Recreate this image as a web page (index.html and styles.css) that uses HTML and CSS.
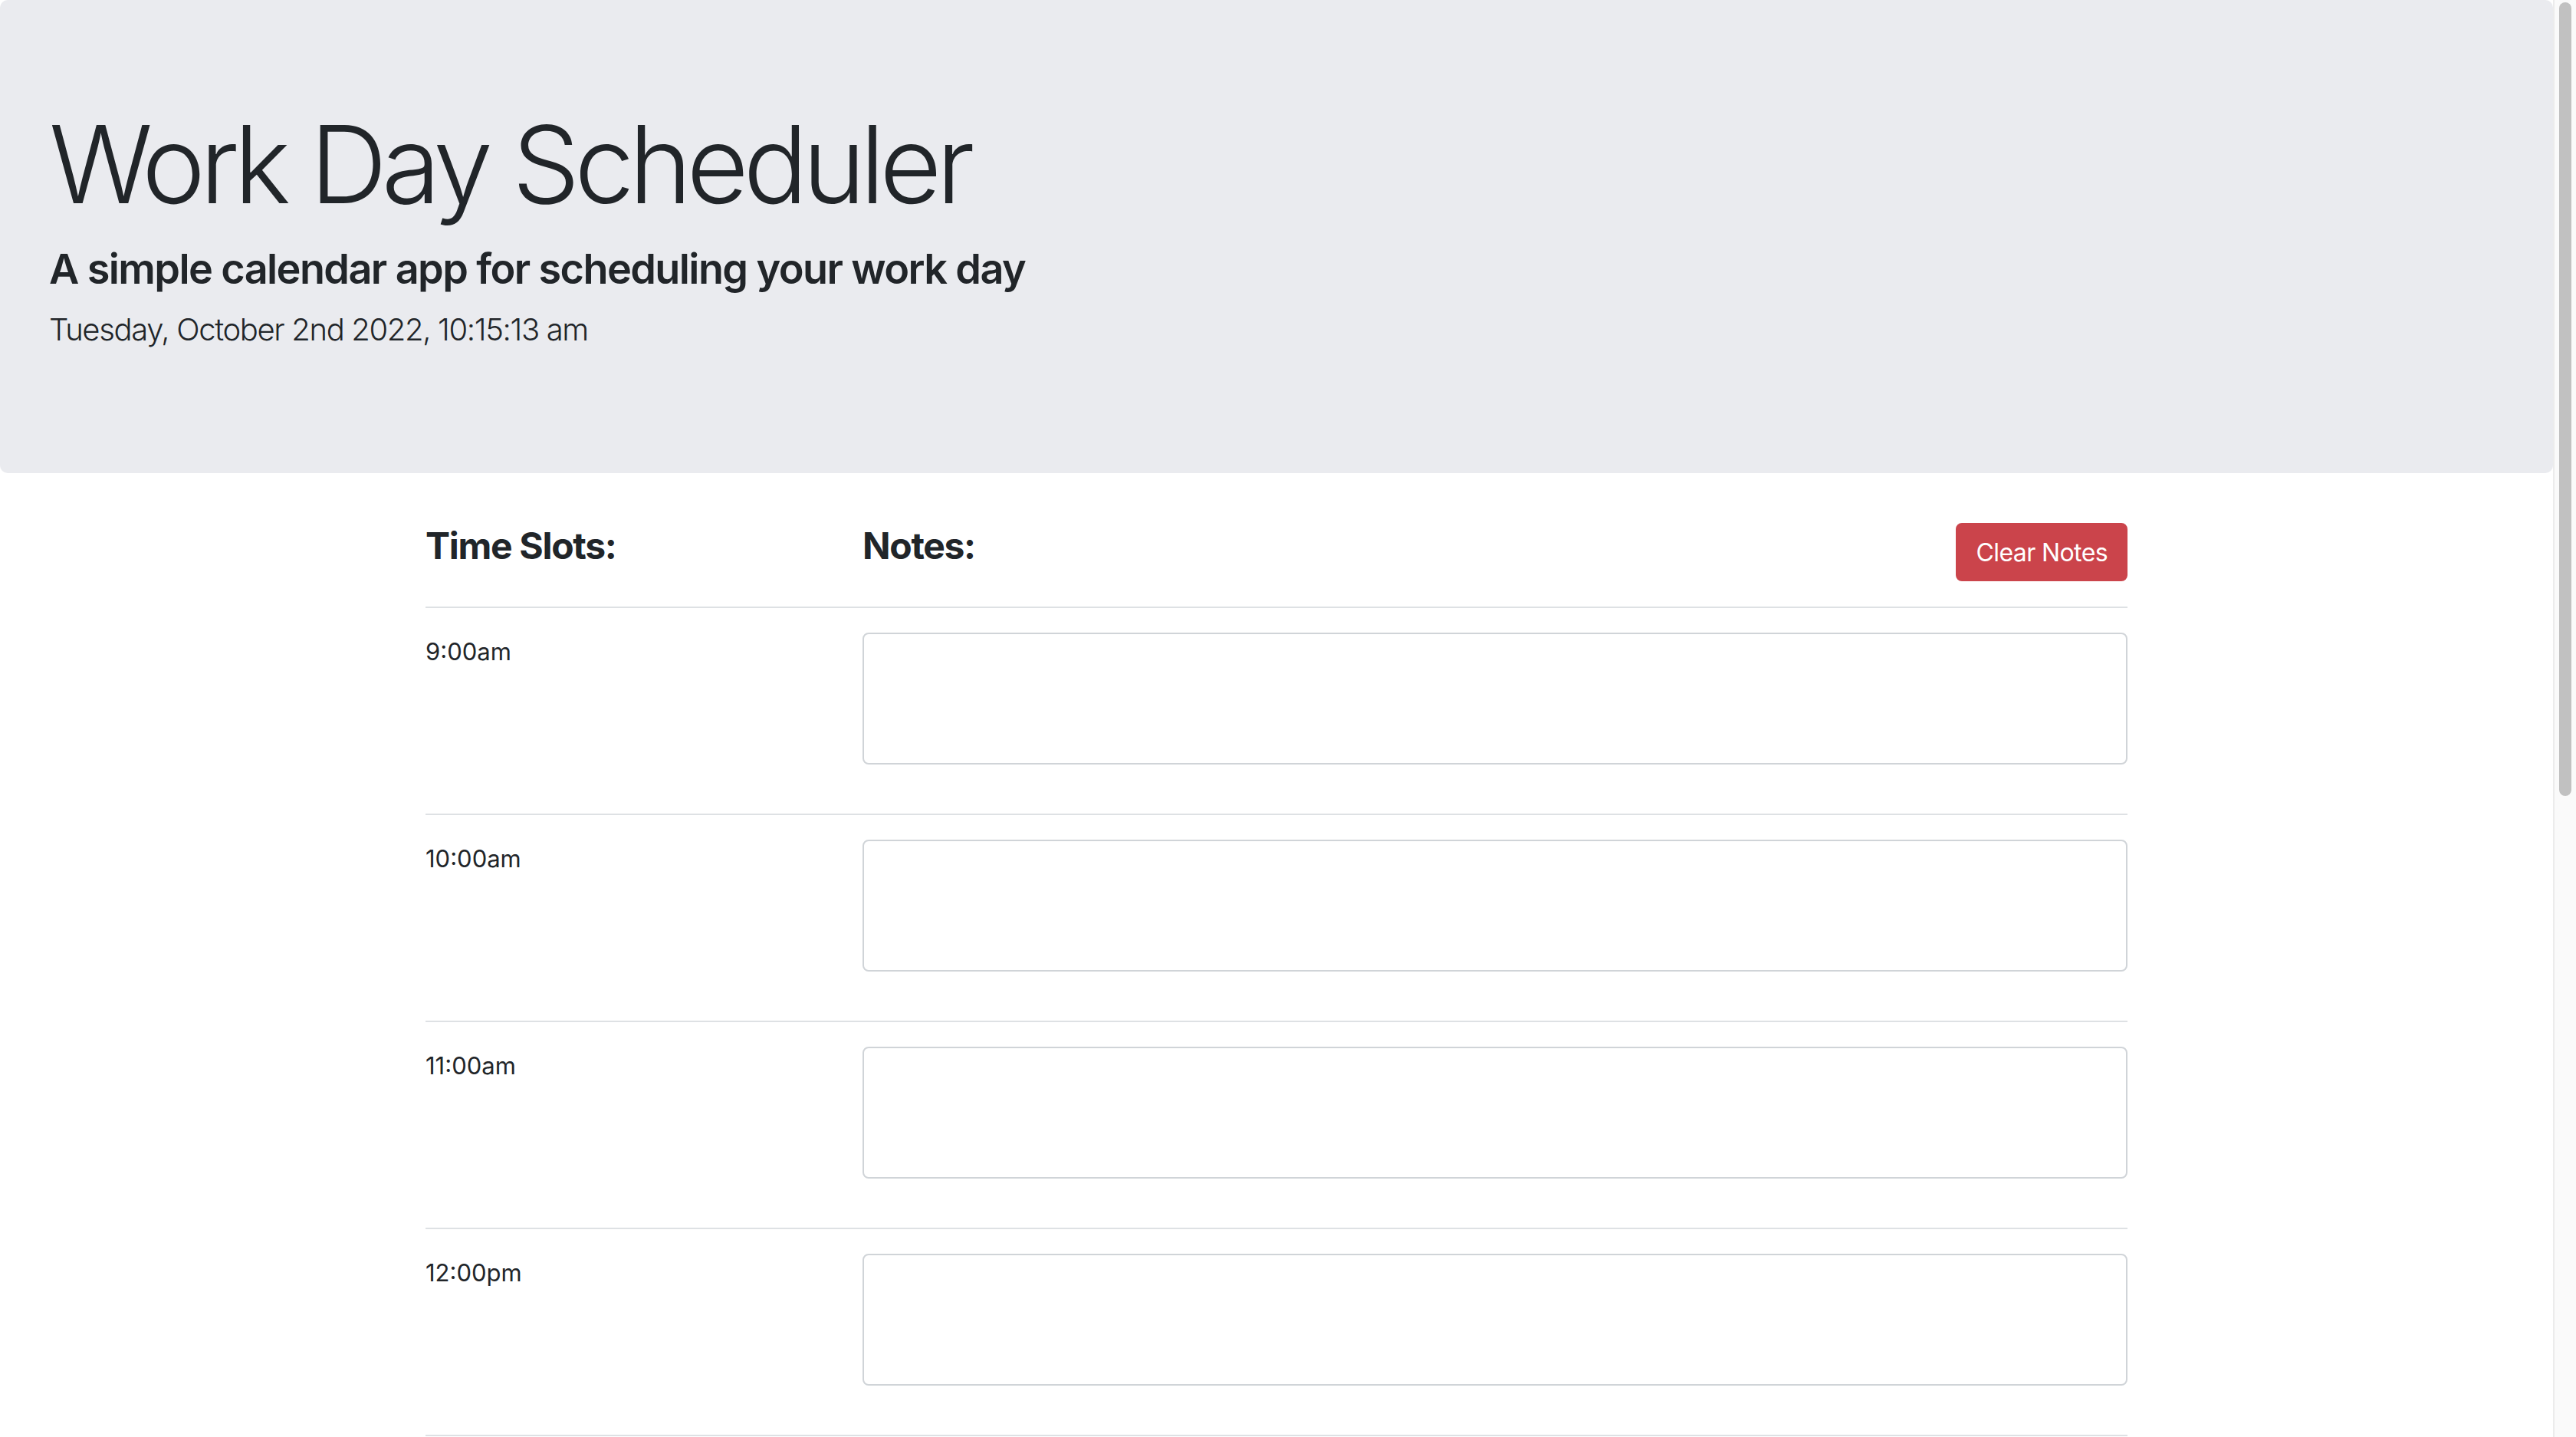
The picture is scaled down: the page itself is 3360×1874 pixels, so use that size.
FILE: index.html
```html
<!DOCTYPE html>
<html lang="en">
<head>
<meta charset="utf-8">
<title>Work Day Scheduler</title>
<link rel="stylesheet" href="styles.css">
</head>
<body>
<header class="jumbotron">
  <h1 class="display-title">Work Day Scheduler</h1>
  <h3 class="subtitle">A simple calendar app for scheduling your work day</h3>
  <p class="lead">Tuesday, October 2nd 2022, 10:15:13 am</p>
</header>
<main class="container">
  <div class="row heading-row">
    <div class="col-time"><h4 class="col-title">Time Slots:</h4></div>
    <div class="col-notes notes-head">
      <h4 class="col-title">Notes:</h4>
      <button class="btn-danger" type="button">Clear Notes</button>
    </div>
  </div>
  <hr class="divider">
  <div class="row slot">
    <div class="col-time"><span class="hour">9:00am</span></div>
    <div class="col-notes"><textarea class="note" rows="3"></textarea></div>
  </div>
  <hr class="divider">
  <div class="row slot">
    <div class="col-time"><span class="hour">10:00am</span></div>
    <div class="col-notes"><textarea class="note" rows="3"></textarea></div>
  </div>
  <hr class="divider">
  <div class="row slot">
    <div class="col-time"><span class="hour">11:00am</span></div>
    <div class="col-notes"><textarea class="note" rows="3"></textarea></div>
  </div>
  <hr class="divider">
  <div class="row slot">
    <div class="col-time"><span class="hour">12:00pm</span></div>
    <div class="col-notes"><textarea class="note" rows="3"></textarea></div>
  </div>
  <hr class="divider">
</main>
<div class="scrollbar" aria-hidden="true"><div class="scroll-thumb"></div></div>
</body>
</html>
```
FILE: styles.css
```css
html {
  overflow: hidden;
}

body {
  margin: 0 30px 0 0;
  font-family: Inter, "Noto Sans", "Liberation Sans", sans-serif;
  font-size: 32px;
  line-height: 1.5;
  color: #212529;
  background: #fff;
}

.scrollbar {
  position: fixed;
  top: 0;
  right: 0;
  bottom: 0;
  width: 28px;
  background: #fafafa;
  border-left: 2px solid #ececec;
}

.scroll-thumb {
  margin: 3px 0 0 6px;
  width: 16px;
  height: 1035px;
  background: #c1c1c1;
  border-radius: 8px;
}

.jumbotron {
  background: #eaebef;
  border-radius: 10px;
  padding: 128px 64px;
  margin-bottom: 64px;
}

.display-title {
  margin: 0 0 16px;
  font-size: 140px;
  font-weight: 300;
  line-height: 172.8px;
  letter-spacing: -7.2px;
}

.subtitle {
  margin: 0 0 16px;
  font-size: 54px;
  font-weight: 600;
  line-height: 67.2px;
  letter-spacing: -1.6px;
}

.lead {
  margin: 0 0 29px;
  font-size: 40px;
  font-weight: 300;
  line-height: 60px;
  letter-spacing: -1.35px;
}

.container {
  width: 2220px;
  margin: 0 auto;
  padding: 0 30px;
}

.row {
  display: flex;
  margin: 0 -30px;
}

.col-time {
  flex: 0 0 25%;
  box-sizing: border-box;
  padding: 0 30px;
}

.col-notes {
  flex: 0 0 75%;
  box-sizing: border-box;
  padding: 0 30px;
}

.notes-head {
  display: flex;
  justify-content: space-between;
  align-items: flex-start;
}

.col-title {
  margin: 0 0 16px;
  padding-top: 2px;
  font-size: 48px;
  font-weight: 700;
  line-height: 57.6px;
  letter-spacing: -1.3px;
}

.btn-danger {
  margin-top: 1px;
  font-family: inherit;
  font-size: 32px;
  line-height: 48px;
  letter-spacing: -0.6px;
  color: #fff;
  background: #cb444b;
  border: 2px solid #cb444b;
  border-radius: 8px;
  padding: 13px 24px 11px;
}

.divider {
  margin: 33px 0 32px;
  border: 0;
  border-top: 2px solid #dee1e4;
  height: 0;
}

.hour {
  display: block;
  padding-top: 4px;
  font-size: 31px;
  line-height: 42px;
}

.note {
  display: block;
  width: 100%;
  box-sizing: border-box;
  margin: 0 0 31px;
  padding: 12px 24px;
  font-family: inherit;
  font-size: 32px;
  line-height: 48px;
  color: #495057;
  background: #fff;
  border: 2px solid #d0d4d8;
  border-radius: 8px;
  resize: none;
}
```
